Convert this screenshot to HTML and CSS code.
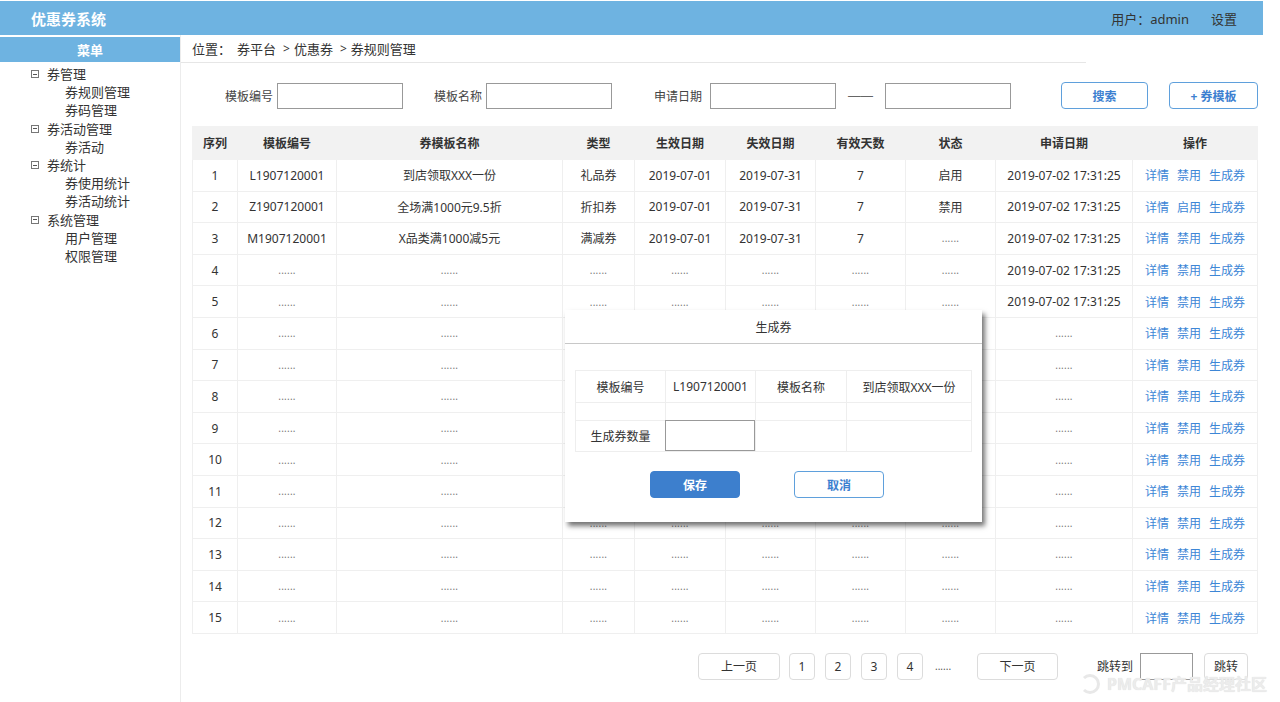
FILE: index.html
```html
<!DOCTYPE html>
<html lang="zh">
<head>
<meta charset="utf-8">
<title>优惠券系统</title>
<link rel="stylesheet" href="styles.css">
</head>
<body>
<div class="page">
  <header class="header">
    <div class="brand">优惠券系统</div>
    <div class="header-right">
      <span class="user">用户：admin</span>
      <span class="setting">设置</span>
    </div>
  </header>
  <div class="main">
    <aside class="sidebar">
      <div class="menu-title">菜单</div>
      <ul class="tree">
        <li class="group"><span class="toggle"></span>券管理</li>
        <li class="leaf">券规则管理</li>
        <li class="leaf">券码管理</li>
        <li class="group"><span class="toggle"></span>券活动管理</li>
        <li class="leaf">券活动</li>
        <li class="group"><span class="toggle"></span>券统计</li>
        <li class="leaf">券使用统计</li>
        <li class="leaf">券活动统计</li>
        <li class="group"><span class="toggle"></span>系统管理</li>
        <li class="leaf">用户管理</li>
        <li class="leaf">权限管理</li>
      </ul>
    </aside>
    <section class="content">
      <div class="crumb">
        <span class="c-label">位置：</span><span class="c-item">券平台</span><span class="c-sep">&gt;</span><span class="c-item">优惠券</span><span class="c-sep">&gt;</span><span class="c-item">券规则管理</span>
      </div>
      <div class="search">
        <label class="s-label s-first">模板编号</label><input class="s-input" type="text">
        <label class="s-label s-second">模板名称</label><input class="s-input" type="text">
        <label class="s-label s-third">申请日期</label><input class="s-input s-date" type="text">
        <span class="s-dash">——</span><input class="s-input" type="text">
        <button class="btn-outline btn-search">搜索</button>
        <button class="btn-outline btn-add">+ 券模板</button>
      </div>
      <table class="grid">
        <colgroup>
          <col class="w45"><col class="w99"><col class="w226"><col class="w72"><col class="w91"><col class="w90"><col class="w90"><col class="w90"><col class="w137"><col class="w125">
        </colgroup>
        <thead>
          <tr><th>序列</th><th>模板编号</th><th>券模板名称</th><th>类型</th><th>生效日期</th><th>失效日期</th><th>有效天数</th><th>状态</th><th>申请日期</th><th>操作</th></tr>
        </thead>
        <tbody>
          <tr><td>1</td><td>L1907120001</td><td>到店领取XXX一份</td><td>礼品券</td><td>2019-07-01</td><td>2019-07-31</td><td>7</td><td>启用</td><td>2019-07-02 17:31:25</td><td class="ops"><a>详情</a><a>禁用</a><a>生成券</a></td></tr>
          <tr><td>2</td><td>Z1907120001</td><td>全场满1000元9.5折</td><td>折扣券</td><td>2019-07-01</td><td>2019-07-31</td><td>7</td><td>禁用</td><td>2019-07-02 17:31:25</td><td class="ops"><a>详情</a><a>启用</a><a>生成券</a></td></tr>
          <tr><td>3</td><td>M1907120001</td><td>X品类满1000减5元</td><td>满减券</td><td>2019-07-01</td><td>2019-07-31</td><td>7</td><td class="dots">......</td><td>2019-07-02 17:31:25</td><td class="ops"><a>详情</a><a>禁用</a><a>生成券</a></td></tr>
          <tr><td>4</td><td class="dots">......</td><td class="dots">......</td><td class="dots">......</td><td class="dots">......</td><td class="dots">......</td><td class="dots">......</td><td class="dots">......</td><td>2019-07-02 17:31:25</td><td class="ops"><a>详情</a><a>禁用</a><a>生成券</a></td></tr>
          <tr><td>5</td><td class="dots">......</td><td class="dots">......</td><td class="dots">......</td><td class="dots">......</td><td class="dots">......</td><td class="dots">......</td><td class="dots">......</td><td>2019-07-02 17:31:25</td><td class="ops"><a>详情</a><a>禁用</a><a>生成券</a></td></tr>
          <tr><td>6</td><td class="dots">......</td><td class="dots">......</td><td></td><td></td><td></td><td></td><td></td><td class="dots">......</td><td class="ops"><a>详情</a><a>禁用</a><a>生成券</a></td></tr>
          <tr><td>7</td><td class="dots">......</td><td class="dots">......</td><td></td><td></td><td></td><td></td><td></td><td class="dots">......</td><td class="ops"><a>详情</a><a>禁用</a><a>生成券</a></td></tr>
          <tr><td>8</td><td class="dots">......</td><td class="dots">......</td><td></td><td></td><td></td><td></td><td></td><td class="dots">......</td><td class="ops"><a>详情</a><a>禁用</a><a>生成券</a></td></tr>
          <tr><td>9</td><td class="dots">......</td><td class="dots">......</td><td></td><td></td><td></td><td></td><td></td><td class="dots">......</td><td class="ops"><a>详情</a><a>禁用</a><a>生成券</a></td></tr>
          <tr><td>10</td><td class="dots">......</td><td class="dots">......</td><td></td><td></td><td></td><td></td><td></td><td class="dots">......</td><td class="ops"><a>详情</a><a>禁用</a><a>生成券</a></td></tr>
          <tr><td>11</td><td class="dots">......</td><td class="dots">......</td><td></td><td></td><td></td><td></td><td></td><td class="dots">......</td><td class="ops"><a>详情</a><a>禁用</a><a>生成券</a></td></tr>
          <tr><td>12</td><td class="dots">......</td><td class="dots">......</td><td class="dots">......</td><td class="dots">......</td><td class="dots">......</td><td class="dots">......</td><td class="dots">......</td><td class="dots">......</td><td class="ops"><a>详情</a><a>禁用</a><a>生成券</a></td></tr>
          <tr><td>13</td><td class="dots">......</td><td class="dots">......</td><td class="dots">......</td><td class="dots">......</td><td class="dots">......</td><td class="dots">......</td><td class="dots">......</td><td class="dots">......</td><td class="ops"><a>详情</a><a>禁用</a><a>生成券</a></td></tr>
          <tr><td>14</td><td class="dots">......</td><td class="dots">......</td><td class="dots">......</td><td class="dots">......</td><td class="dots">......</td><td class="dots">......</td><td class="dots">......</td><td class="dots">......</td><td class="ops"><a>详情</a><a>禁用</a><a>生成券</a></td></tr>
          <tr><td>15</td><td class="dots">......</td><td class="dots">......</td><td class="dots">......</td><td class="dots">......</td><td class="dots">......</td><td class="dots">......</td><td class="dots">......</td><td class="dots">......</td><td class="ops"><a>详情</a><a>禁用</a><a>生成券</a></td></tr>
        </tbody>
      </table>
      <div class="pager">
        <button class="pg pg-wide">上一页</button>
        <button class="pg pg-num pg-first">1</button>
        <button class="pg pg-num">2</button>
        <button class="pg pg-num">3</button>
        <button class="pg pg-num">4</button>
        <span class="pg-dots">......</span>
        <button class="pg pg-wide pg-next">下一页</button>
        <span class="pg-jump-label">跳转到</span>
        <input class="pg-input" type="text">
        <button class="pg pg-go">跳转</button>
      </div>
    </section>
  </div>

  <div class="modal">
    <div class="modal-title">生成券</div>
    <div class="modal-body">
      <table class="mtable">
        <colgroup><col class="m90"><col class="m90"><col class="m91"><col class="m125"></colgroup>
        <tr class="mrow1"><td>模板编号</td><td>L1907120001</td><td>模板名称</td><td>到店领取XXX一份</td></tr>
        <tr class="mrow2"><td></td><td></td><td></td><td></td></tr>
        <tr class="mrow3"><td>生成券数量</td><td class="mcell-input"><input class="m-input" type="text"></td><td></td><td></td></tr>
      </table>
      <div class="modal-actions">
        <button class="btn-save">保存</button>
        <button class="btn-cancel">取消</button>
      </div>
    </div>
  </div>

  <div class="watermark"><span class="wm-logo"></span>PMCAFF产品经理社区</div>
</div>
</body>
</html>
```

FILE: styles.css
```css
* { box-sizing: border-box; }
html, body { margin: 0; padding: 0; background: #fff; }
body {
  font-family: "Noto Sans", "Noto Sans CJK SC", sans-serif;
  font-size: 12px;
  color: #333;
}
.page { position: relative; width: 1280px; height: 702px; overflow: hidden; }

.header {
  margin-top: 1px;
  width: 1263px;
  height: 34px;
  background: #6eb3e1;
  display: flex;
  align-items: center;
  justify-content: space-between;
}
.brand { padding-left: 31px; color: #fff; font-weight: bold; font-size: 15px; }
.header-right { display: flex; align-items: center; padding-right: 26px; font-size: 13px; color: #333; }
.setting { margin-left: 22px; }

.main { display: flex; height: 667px; }
.sidebar { width: 181px; border-right: 1px solid #ececec; flex: none; }
.menu-title {
  margin-top: 2px;
  height: 25px;
  background: #6eb3e1;
  color: #fff;
  font-weight: bold;
  font-size: 13px;
  display: flex;
  align-items: center;
  justify-content: center;
}
.tree { list-style: none; margin: 0; padding: 3px 0 0 0; font-size: 13px; color: #333; }
.tree li { height: 18.2px; line-height: 18px; white-space: nowrap; }
.tree .group { padding-left: 31px; display: flex; align-items: center; }
.tree .leaf { padding-left: 65px; }
.toggle {
  display: inline-block;
  width: 8px; height: 8px;
  border: 1px solid #777;
  position: relative;
  margin-right: 8px;
}
.toggle::after {
  content: "";
  position: absolute;
  left: 1px; right: 1px; top: 2.5px;
  height: 1px;
  background: #555;
}

.content { flex: 1; padding-left: 11px; }
.crumb {
  width: 905px;
  margin-left: -11px;
  padding-left: 11px;
  height: 28px;
  border-bottom: 1px solid #e6e6e6;
  display: flex;
  align-items: center;
  font-size: 13px;
  color: #333;
}
.c-label { margin-right: 6px; }
.c-sep { margin: 0 4px 0 7px; font-size: 12px; }

.search {
  display: flex;
  align-items: center;
  height: 27px;
  margin-top: 19px;
}
.s-label { color: #444; font-size: 12px; margin-right: 4px; }
.s-first { margin-left: 33px; }
.s-second { margin-left: 31px; }
.s-third { margin-left: 42px; margin-right: 8px; }
.s-input {
  width: 126px; height: 26px;
  border: 1px solid #999;
  border-radius: 0;
  padding: 0;
  background: #fff;
}
.s-dash {
  margin: 0 12px 0 12px;
  color: #666;
  font-family: "Liberation Sans", sans-serif;
  font-size: 12.5px;
}
.btn-outline {
  height: 27px;
  border: 1px solid #5fa0dc;
  border-radius: 4px;
  background: #fff;
  color: #3c80d0;
  font-weight: bold;
  font-size: 12px;
  font-family: inherit;
}
.btn-search { width: 87px; margin-left: 50px; }
.btn-add { width: 89px; margin-left: 21px; }

.grid {
  margin-top: 17px;
  width: 1065px;
  border-collapse: collapse;
  table-layout: fixed;
}
.w45 { width: 45px; } .w99 { width: 99px; } .w226 { width: 226px; } .w72 { width: 72px; }
.w91 { width: 91px; } .w90 { width: 90px; } .w137 { width: 137px; } .w125 { width: 125px; }
.grid th {
  height: 33px;
  background: #f2f2f2;
  font-weight: bold;
  font-size: 12px;
  color: #333;
  border: 1px solid #f2f2f2;
  padding: 0;
}
.grid td {
  height: 31.6px;
  border: 1px solid #efefef;
  text-align: center;
  padding: 0;
  font-size: 12px;
  color: #333;
  white-space: nowrap;
}
.grid td.dots { color: #777; font-size: 10px; letter-spacing: 0.2px; }
.ops a { color: #3d86d6; margin: 0 4px; }

.pager { display: flex; align-items: center; margin-top: 19px; padding-left: 506px; }
.pg {
  height: 27px;
  border: 1px solid #dcdcdc;
  border-radius: 4px;
  background: #fff;
  font-family: inherit;
  font-size: 12px;
  color: #333;
  padding: 0;
}
.pg-wide { width: 82px; }
.pg-num { width: 26px; margin-left: 10px; }
.pg-num.pg-first { margin-left: 9px; }
.pg-dots { margin-left: 12px; font-size: 10px; color: #555; }
.pg-next { margin-left: 26px; width: 81px; }
.pg-jump-label { margin-left: 39px; font-size: 12px; }
.pg-input { margin-left: 7px; width: 53px; height: 27px; border: 1px solid #999; padding: 0; }
.pg-go { width: 44px; margin-left: 11px; }

.modal {
  position: absolute;
  left: 565px; top: 310px;
  width: 417px; height: 212px;
  background: #fff;
  box-shadow: 3px 4px 5px rgba(0, 0, 0, 0.55);
}
.modal-title {
  height: 34px;
  border-bottom: 1px solid #c8c8c8;
  display: flex;
  align-items: center;
  justify-content: center;
  font-size: 12px;
  color: #333;
}
.modal-body { padding: 26px 10px 0 10px; }
.mtable { width: 396px; border-collapse: collapse; table-layout: fixed; }
.m90 { width: 90px; } .m91 { width: 91px; } .m125 { width: 125px; }
.mtable td { border: 1px solid #eeeeee; text-align: center; padding: 0; font-size: 12px; color: #333; white-space: nowrap; }
.mrow1 td { height: 32px; }
.mrow2 td { height: 18px; }
.mrow3 td { height: 30px; }
.mcell-input { position: relative; }
.m-input {
  display: block;
  width: 90px; height: 31px;
  margin: -1px 0 0 -1px;
  border: 1px solid #999;
  padding: 0;
}
.modal-actions { display: flex; padding-left: 75px; margin-top: 19px; }
.btn-save {
  width: 90px; height: 27px;
  background: #3d7fcd;
  border: 1px solid #3d7fcd;
  border-radius: 4px;
  color: #fff;
  font-weight: bold;
  font-size: 12px;
  font-family: inherit;
}
.btn-cancel {
  width: 90px; height: 27px;
  margin-left: 54px;
  background: #fff;
  border: 1px solid #5fa0dc;
  border-radius: 4px;
  color: #3c80d0;
  font-weight: bold;
  font-size: 12px;
  font-family: inherit;
}

.watermark {
  position: absolute;
  left: 1080px; top: 675px;
  height: 18px;
  display: flex;
  align-items: center;
  font-size: 16px;
  line-height: 16px;
  color: #ececec;
  font-weight: bold;
  white-space: nowrap;
  text-shadow: 0 0 1px #d8d8d8;
}
.wm-logo {
  display: inline-block;
  width: 20px; height: 20px;
  border: 3px solid #e8e8e8;
  border-left-color: transparent;
  border-radius: 50%;
  margin-right: 7px;
}
```
